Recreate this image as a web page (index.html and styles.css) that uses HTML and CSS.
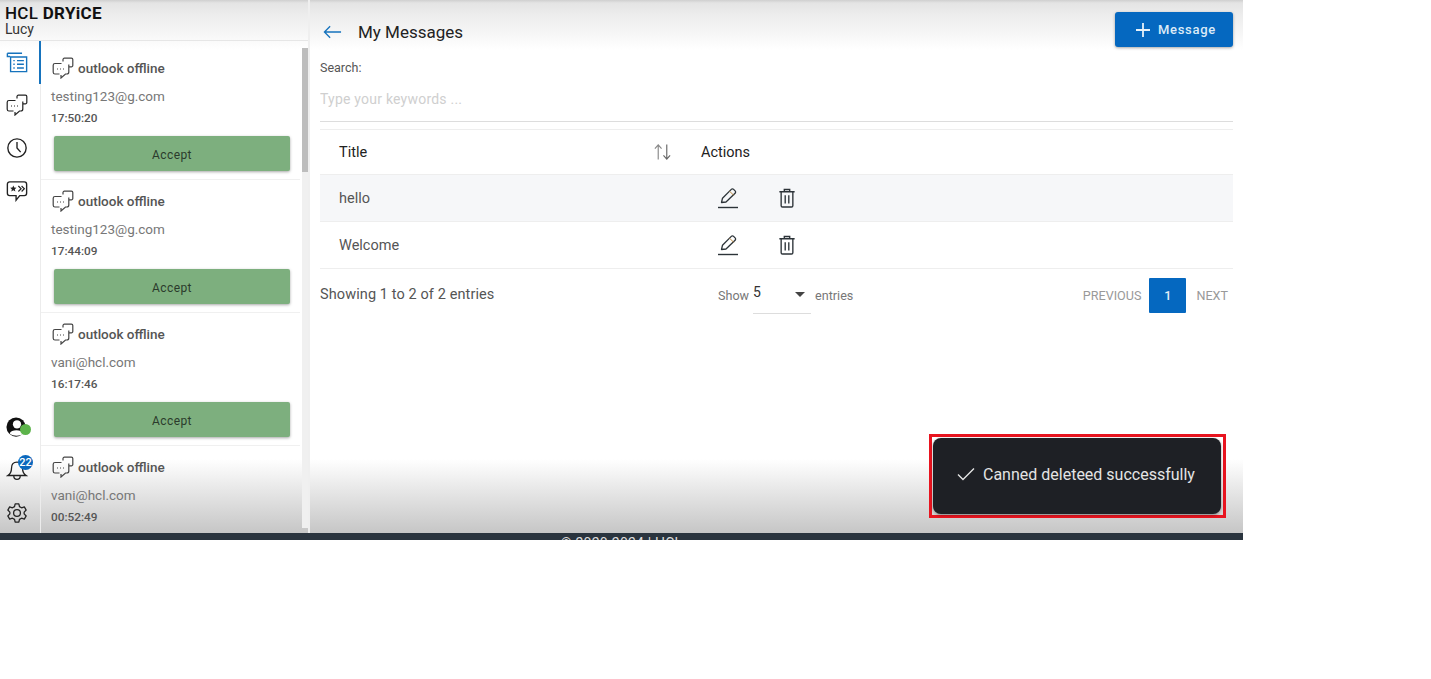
FILE: index.html
```html
<!DOCTYPE html>
<html lang="en">
<head>
<meta charset="utf-8">
<title>My Messages</title>
<link rel="stylesheet" href="styles.css">
</head>
<body>
<svg class="defs" width="0" height="0" aria-hidden="true">
  <symbol id="chat" viewBox="0 0 22 22">
    <path d="M9.500 6.500H3A1.800 1.800 0 0 0 1.200 8.300v6.900A1.800 1.800 0 0 0 3 17h4.500" fill="none" stroke="currentColor" stroke-width="1.200"/>
    <path d="M11 4.500V2.600A1.400 1.400 0 0 1 12.400 1.200h7A1.400 1.400 0 0 1 20.800 2.600v5.800a1.400 1.400 0 0 1-1.400 1.400H17" fill="none" stroke="currentColor" stroke-width="1.200"/>
    <path d="M16.800 7.500v7.500a2 2 0 0 1-2 2H13.500L9 21v-3" fill="none" stroke="currentColor" stroke-width="1.200"/>
    <path d="M5 12h1M8 12h1M11 12h1" stroke="currentColor" stroke-width="1"/>
  </symbol>
  <symbol id="edit" viewBox="0 0 22 22">
    <path d="M4.500 15.500l1-4.300L14.300 2.400a1.600 1.600 0 0 1 2.300 0l1.500 1.500a1.600 1.600 0 0 1 0 2.300L9 15z" fill="none" stroke="currentColor" stroke-width="1.300" stroke-linejoin="round"/>
    <path d="M12.700 4.300l4 4" stroke="#b8863a" stroke-width="1"/>
    <path d="M1 20.500h20" stroke="currentColor" stroke-width="1.400"/>
  </symbol>
  <symbol id="trash" viewBox="0 0 20 22">
    <path d="M1.500 4h17M7 4V1.500h6V4M3.500 4v15.500a1.500 1.500 0 0 0 1.500 1.500h10a1.500 1.500 0 0 0 1.500-1.500V4M8 8v9M12 8v9" fill="none" stroke="currentColor" stroke-width="1.500"/>
  </symbol>
</svg>

<div class="app">
  <div class="workspace">
    <aside class="left">
      <header class="brand">
        <div class="logo">HCL <b>DRYiCE</b></div>
        <div class="agent">Lucy</div>
      </header>
      <div class="left-body">
        <nav class="rail">
          <div class="rail-group">
            <svg class="rail-icon blue" viewBox="0 0 24 24"><path d="M1.500 2.500h16M1.500 2.500v3.500h3M5 6.500h17.500V22.500H5z" fill="none" stroke="currentColor" stroke-width="1.500"/><path d="M8 10.500h1.500M12 10.500h7.500M8 14.500h1.500M12 14.500h7.500M8 18.500h1.500M12 18.500h7.500" stroke="currentColor" stroke-width="1.500"/></svg>
            <svg class="rail-icon"><use href="#chat"/></svg>
            <svg class="rail-icon" viewBox="0 0 24 24"><circle cx="12" cy="12" r="10" fill="none" stroke="currentColor" stroke-width="1.500"/><path d="M12 5.500V12l4 4.500" fill="none" stroke="currentColor" stroke-width="1.500"/></svg>
            <svg class="rail-icon" viewBox="0 0 24 24"><path d="M4 2h16a2.500 2.500 0 0 1 2.500 2.500v10a2.500 2.500 0 0 1-2.500 2.500h-5l-4 5v-5H4a2.500 2.500 0 0 1-2.500-2.500v-10A2.500 2.500 0 0 1 4 2z" fill="none" stroke="currentColor" stroke-width="1.500"/><path d="M8 6l1 2.300 2.400.2-1.800 1.600.6 2.400L8 11.200l-2.200 1.300.6-2.400L4.600 8.500 7 8.300z" fill="currentColor"/><path d="M13.500 6.500l3 3-3 3M17 6.500l3 3-3 3" fill="none" stroke="currentColor" stroke-width="1.300"/></svg>
          </div>
          <div class="rail-group">
            <div class="avatar">
              <svg class="rail-icon" viewBox="0 0 24 24"><circle cx="11" cy="12" r="10.500" fill="#111"/><circle cx="12" cy="9" r="4.500" fill="#fff"/><path d="M4 19c1.500-4.500 13-4.500 15 0-3 3-11 3.500-15 0z" fill="#fff"/></svg>
              <span class="status"></span>
            </div>
            <div class="bell">
              <svg class="rail-icon" viewBox="0 0 24 24"><path d="M12 3.500c-4 0-6 3-6 6.500 0 4-1 6-4 8h20c-3-2-4-4-4-8 0-3.500-2-6.500-6-6.500zM8.500 18.500c0 5 7 5 7 0" fill="none" stroke="currentColor" stroke-width="1.400"/></svg>
              <span class="badge">22</span>
            </div>
            <svg class="rail-icon" viewBox="0 0 24 24"><circle cx="12" cy="12" r="3.700" fill="none" stroke="currentColor" stroke-width="1.400"/><path d="M10 2h4l.7 3 2.300 1.300 3-.9 2 3.400-2.200 2.200v2l2.200 2.200-2 3.400-3-.9-2.300 1.300-.7 3h-4l-.7-3L7 17.700l-3 .9-2-3.400L4.200 13v-2L2 8.800l2-3.400 3 .9 2.300-1.300z" fill="none" stroke="currentColor" stroke-width="1.400" stroke-linejoin="round"/></svg>
          </div>
        </nav>
        <div class="list">
          <article class="card active">
            <div class="card-title"><svg class="chat"><use href="#chat"/></svg>outlook offline</div>
            <div class="card-mail">testing123@g.com</div>
            <div class="card-time">17:50:20</div>
            <button class="accept">Accept</button>
          </article>
          <article class="card">
            <div class="card-title"><svg class="chat"><use href="#chat"/></svg>outlook offline</div>
            <div class="card-mail">testing123@g.com</div>
            <div class="card-time">17:44:09</div>
            <button class="accept">Accept</button>
          </article>
          <article class="card">
            <div class="card-title"><svg class="chat"><use href="#chat"/></svg>outlook offline</div>
            <div class="card-mail">vani@hcl.com</div>
            <div class="card-time">16:17:46</div>
            <button class="accept">Accept</button>
          </article>
          <article class="card last">
            <div class="card-title"><svg class="chat"><use href="#chat"/></svg>outlook offline</div>
            <div class="card-mail">vani@hcl.com</div>
            <div class="card-time">00:52:49</div>
          </article>
          <div class="scrollbar"><div class="thumb"></div></div>
        </div>
      </div>
    </aside>

    <main class="main">
      <div class="topbar">
        <div class="heading">
          <svg class="back" viewBox="0 0 20 14"><path d="M19 7H1.500M7.500 1L1.500 7l6 6" fill="none" stroke="currentColor" stroke-width="1.400"/></svg>
          <h1>My Messages</h1>
        </div>
        <button class="new-msg"><svg class="plus" viewBox="0 0 14 14"><path d="M7 0v14M0 7h14" stroke="currentColor" stroke-width="1.800"/></svg>Message</button>
      </div>
      <div class="search">
        <label class="search-label" for="kw">Search:</label>
        <input class="search-input" id="kw" placeholder="Type your keywords ...">
      </div>
      <div class="table">
        <div class="row head">
          <div class="col-title">Title<span class="sort"><svg viewBox="0 0 20 18"><path d="M5.500 17V2M2 5.500L5.500 1.500 9 5.500" fill="none" stroke="#888" stroke-width="1.200"/><path d="M14.500 1v15M11 12.500l3.500 4 3.500-4" fill="none" stroke="#666" stroke-width="1.200"/></svg></span></div>
          <div class="col-actions">Actions</div>
        </div>
        <div class="row shaded">
          <div class="col-title">hello</div>
          <div class="col-actions icons"><svg class="edit"><use href="#edit"/></svg><svg class="trash"><use href="#trash"/></svg></div>
        </div>
        <div class="row">
          <div class="col-title">Welcome</div>
          <div class="col-actions icons"><svg class="edit"><use href="#edit"/></svg><svg class="trash"><use href="#trash"/></svg></div>
        </div>
      </div>
      <div class="pager">
        <div class="info">Showing 1 to 2 of 2 entries</div>
        <div class="show">
          <span>Show</span>
          <span class="select"><span class="select-val">5</span><span class="caret"></span></span>
          <span>entries</span>
        </div>
        <div class="pages">
          <span>PREVIOUS</span>
          <span class="current">1</span>
          <span>NEXT</span>
        </div>
      </div>
    </main>
  </div>
  <footer class="footer">© 2020-2024 | HCL</footer>
  <div class="toast-frame">
    <div class="toast">
      <svg class="check" viewBox="0 0 18 14"><path d="M1 7.500l5 5L17 1.500" fill="none" stroke="currentColor" stroke-width="1.400"/></svg>
      <span>Canned deleteed successfully</span>
    </div>
  </div>
</div>
</body>
</html>
```

FILE: styles.css
```css
* { box-sizing: border-box; }
html, body { margin: 0; padding: 0; background: #fff; }
body { font-family: Roboto, "Liberation Sans", sans-serif; color: #333; height: 679px; overflow: hidden; }
.defs { position: absolute; }

.app {
  position: relative; width: 1243px; height: 540px; overflow: hidden;
  display: flex; flex-direction: column;
  background-color: #fff;
  background-image:
    linear-gradient(#cfcfcf 0, #e4e4e4 3px, #ececec 14px, #fff 100%),
    linear-gradient(#fff, #c6c6c6);
  background-repeat: no-repeat;
  background-size: 100% 50px, 100% 74px;
  background-position: 0 0, 0 459px;
}
.workspace { flex: 1; display: flex; min-height: 0; }
.footer { position: relative; height: 7px; flex: none; background: #2a343e; color: #ddd; font-size: 14px; line-height: 14px; letter-spacing: .2px; text-align: center; overflow: hidden; padding-top: 3px; }

.left { width: 310px; flex: none; display: flex; flex-direction: column; border-right: 2px solid #efefef; }
.brand { height: 41px; flex: none; padding: 4px 0 0 5px; border-bottom: 1px solid #e6e6e6; }
.logo { font-size: 17px; line-height: 18px; font-weight: 500; color: #111; letter-spacing: .3px; }
.logo b { font-weight: 700; }
.agent { font-size: 14px; line-height: 15px; color: #333; }
.left-body { flex: 1; display: flex; min-height: 0; }

.rail { width: 41px; flex: none; display: flex; flex-direction: column; justify-content: space-between; padding: 10px 0 9px 6px; border-right: 1px solid #ececec; }
.rail-group { display: flex; flex-direction: column; gap: 21px; }
.rail-icon { width: 22px; height: 22px; display: block; color: #222; }
.rail-icon.blue { color: #1673bd; }
.avatar, .bell { position: relative; width: 22px; height: 22px; }
.status { position: absolute; right: -3px; top: 8px; width: 11px; height: 11px; border-radius: 50%; background: #5cb34a; }
.badge { position: absolute; left: 12px; top: -4px; width: 15px; height: 15px; border-radius: 50%; background: #0b68bd; color: #fff; font-size: 11px; line-height: 15px; font-weight: 500; text-align: center; }

.list { position: relative; flex: 1; min-width: 0; }
.card { position: relative; height: 133px; padding: 10px 0 0 10px; margin-right: 8px; border-bottom: 1px solid #f0f0f0; }
.card.active { height: 139px; padding-top: 16px; }
.card.last { height: auto; border-bottom: 0; }
.card-title { display: flex; align-items: center; gap: 4px; height: 22px; font-size: 13.500px; font-weight: 500; color: #555; }
.chat { width: 22px; height: 22px; margin-left: 1px; color: #444; flex: none; }
.card-mail { margin-top: 7px; font-size: 13.500px; line-height: 20px; color: #777; }
.card-time { margin-top: 4px; font-size: 11.800px; line-height: 16px; font-weight: 500; color: #555; }
.accept { display: block; width: 236px; height: 35px; margin: 10px 0 0 3px; padding: 3px 0 0; border: 0; border-radius: 2px; background: #7daf7e; color: #2b3b2c; font: 12px Roboto, sans-serif; letter-spacing: .4px; box-shadow: 0 1px 3px rgba(0,0,0,.35); }
.card.active::before { content: ""; position: absolute; left: -2px; top: 0; width: 2px; height: 43px; background: #1673bd; }

.scrollbar { position: absolute; right: 0; top: 7px; bottom: 5px; width: 6px; background: #f0f0f0; }
.thumb { height: 124px; background: #bdbdbd; }

.main { flex: 1; min-width: 0; padding: 12px 10px 0 10px; }
.topbar { display: flex; justify-content: space-between; align-items: flex-start; height: 48px; }
.heading { display: flex; align-items: center; gap: 16px; padding: 0 0 0 3px; height: 31px; margin-top: 4px; }
.back { width: 19px; height: 14px; color: #1673bd; }
.heading h1 { margin: 0; font-size: 17px; font-weight: 400; color: #222; }
.new-msg { display: flex; align-items: center; gap: 8px; width: 118px; height: 35px; padding: 0 0 0 21px; border: 0; border-radius: 3px; background: #0568c0; color: #dcebf7; font: 500 13px Roboto, sans-serif; letter-spacing: .7px; box-shadow: 0 1px 3px rgba(0,0,0,.35); }
.plus { width: 14px; height: 14px; color: #e7f1f9; }

.search { border-bottom: 1px solid #ddd; height: 62px; padding-top: 1px; }
.search-label { display: block; font-size: 12.500px; line-height: 14px; color: #555; }
.search-input { display: block; width: 100%; margin-top: 13px; padding: 0; height: 22px; border: 0; outline: 0; background: transparent; font: 14px Roboto, sans-serif; letter-spacing: .22px; }
.search-input::placeholder { color: #cfcfcf; opacity: 1; }

.table { margin-top: 7px; border-top: 1px solid #eee; }
.row { display: flex; align-items: center; height: 47px; border-bottom: 1px solid #eee; font-size: 14.500px; color: #555; }
.row.head { height: 45px; color: #222; }
.row.shaded { background: #f6f7f9; }
.col-title { position: relative; width: 381px; padding-left: 19px; flex: none; }
.sort { position: absolute; right: 29px; top: -1px; width: 19px; height: 18px; }
.sort svg { display: block; width: 19px; height: 18px; }
.col-actions { flex: 1; }
.icons { display: flex; align-items: center; gap: 39px; padding-left: 16px; }
.edit { width: 22px; height: 22px; color: #2c3338; }
.trash { width: 18px; height: 22px; color: #2c3338; }

.pager { display: flex; align-items: center; justify-content: space-between; height: 45px; padding: 8px 5px 0 0; }
.info { font-size: 14.500px; letter-spacing: .1px; color: #555; width: 398px; margin-top: -2px; }
.show { display: flex; align-items: center; gap: 4px; font-size: 12.600px; color: #777; flex: 1; }
.select { position: relative; display: block; width: 58px; height: 35px; border-bottom: 1px solid #ddd; margin-top: 1px; }
.select-val { position: absolute; left: 0; top: 5px; font-size: 14px; color: #333; }
.caret { position: absolute; right: 6px; top: 13px; border: 5px solid transparent; border-top-color: #444; border-bottom: 0; }
.pages { display: flex; align-items: center; gap: 9px; font-size: 12.600px; color: #999; }
.current { width: 37px; height: 35px; margin: 0 1px 0 -1px; background: #0568c0; color: #e3eef8; text-align: center; line-height: 35px; border-radius: 1px; font-weight: 500; }

.toast-frame { position: absolute; left: 929px; top: 434px; width: 297px; height: 84px; border: 3px solid #e8141f; padding: 1px 2px 1px 1px; }
.toast { display: flex; align-items: center; gap: 8px; height: 100%; padding: 0 0 4px 24px; background: #1e2025; border-radius: 8px; color: #e4e4e4; font-size: 16px; box-shadow: 0 1px 3px rgba(0,0,0,.4); }
.check { width: 18px; height: 14px; color: #e4e4e4; }
```
